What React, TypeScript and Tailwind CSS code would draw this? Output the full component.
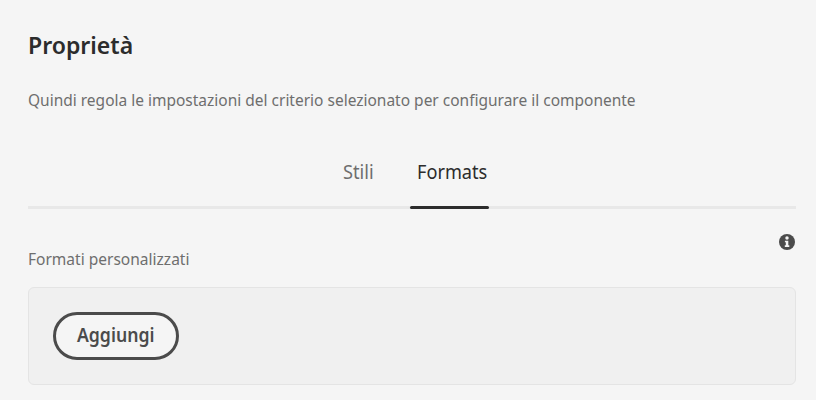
import type { ReactNode } from "react";

function Tab({ children, active = false }: { children: ReactNode; active?: boolean }) {
  return (
    <button
      role="tab"
      aria-selected={active}
      className={
        active
          ? "flex h-[50px] w-[79px] items-start pl-[7px] text-[#2c2c2c]"
          : "flex h-[50px] w-[68px] items-start text-[#6e6e6e]"
      }
    >
      {children}
    </button>
  );
}

function InfoIcon() {
  return (
    <svg width="16" height="16" viewBox="0 0 16 16" aria-hidden="true">
      <circle cx="8" cy="8" r="8" fill="#4b4b4b" />
      <circle cx="8" cy="4" r="1.75" fill="#f5f5f5" />
      <path d="M5.9 6.7H9.3V11.3H10.3V12.9H5.8V11.3H6.8V8.2H5.9Z" fill="#f5f5f5" />
    </svg>
  );
}

export default function App() {
  return (
    <main className="h-[400px] w-[816px] overflow-hidden bg-[#f5f5f5] pt-[29px] pr-5 pl-7 font-['Noto_Sans',sans-serif] text-[#6e6e6e]">
      <h1 className="h-8 w-fit origin-left scale-x-[0.96] text-2xl leading-8 font-semibold whitespace-nowrap text-[#2c2c2c]">
        Proprietà
      </h1>
      <p className="mt-[27px] h-6 w-fit origin-left scale-x-[0.911] text-[17px] leading-6 whitespace-nowrap">
        Quindi regola le impostazioni del criterio selezionato per configurare il componente
      </p>
      <div role="tablist" className="mt-[46px] flex h-[51px] border-b-[3px] border-[#e8e8e8] pl-[314px]">
        <Tab>
          <span className="ml-px origin-left scale-x-[0.96] text-[19px] leading-7 whitespace-nowrap">Stili</span>
        </Tab>
        <div className="relative">
          <Tab active>
            <span className="origin-left scale-x-[0.955] text-[19px] leading-7 whitespace-nowrap">Formats</span>
          </Tab>
          <span className="absolute top-[48px] left-0 h-[3px] w-full rounded-full bg-[#2c2c2c]" />
        </div>
      </div>
      <div className="flex h-[78px] items-start justify-between pt-[25px]">
        <h2 className="mt-[13px] origin-left scale-x-[0.913] text-[17px] leading-6 font-normal whitespace-nowrap">
          Formati personalizzati
        </h2>
        <span className="mr-px">
          <InfoIcon />
        </span>
      </div>
      <section className="h-[98px] rounded-md border border-[#e4e4e4] bg-[#f0f0f0] p-6">
        <button className="flex h-12 w-[126px] items-center justify-center rounded-full border-[3px] border-[#4b4b4b] bg-[#f5f5f5] pb-[2px] text-[19px] leading-7 font-semibold text-[#4b4b4b]">
          <span className="scale-x-[0.93] whitespace-nowrap">Aggiungi</span>
        </button>
      </section>
    </main>
  );
}
